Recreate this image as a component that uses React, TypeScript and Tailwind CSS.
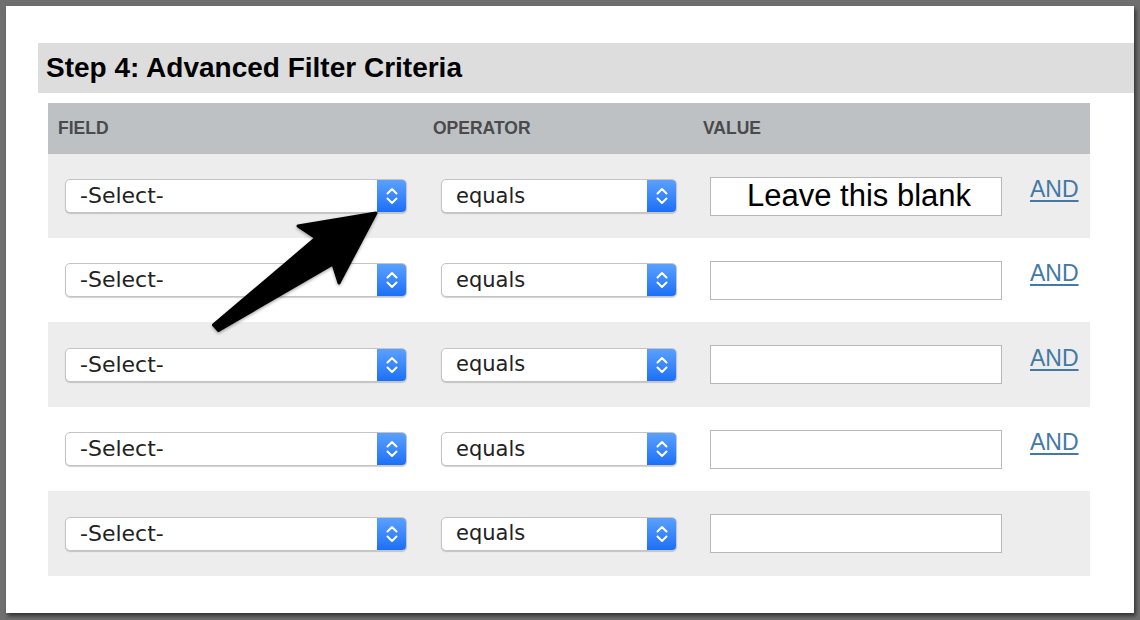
import React from "react";

const rowHeights = [84, 84, 85, 84, 85];

function Chevrons() {
  return (
    <svg width="12" height="20" viewBox="0 0 12 20" fill="none">
      <path d="M1.5 7.5 L6 3 L10.5 7.5" stroke="white" strokeWidth="2" strokeLinecap="round" strokeLinejoin="round" />
      <path d="M1.5 12.5 L6 17 L10.5 12.5" stroke="white" strokeWidth="2" strokeLinecap="round" strokeLinejoin="round" />
    </svg>
  );
}

function MacSelect({ label, width, size }: { label: string; width: string; size: string }) {
  return (
    <div
      className={`${width} h-[34px] flex items-stretch rounded-[5px] border border-[#c4c4c4] bg-white shadow-[0_1px_1px_rgba(0,0,0,0.18)] overflow-hidden`}
    >
      <div
        className={`flex-1 flex items-center pl-[14px] ${size} text-[#222] leading-none`}
        style={{ fontFamily: '"DejaVu Sans", "Noto Sans", sans-serif' }}
      >
        {label}
      </div>
      <div className="w-[29px] flex items-center justify-center bg-gradient-to-b from-[#5aa0ff] to-[#1b6ff6]">
        <Chevrons />
      </div>
    </div>
  );
}

export default function App() {
  return (
    <div
      className="relative w-[1140px] h-[620px] bg-[#6f6f6f] overflow-hidden"
      style={{ fontFamily: '"Liberation Sans", Arial, sans-serif' }}
    >
      <div className="absolute left-[6px] top-[6px] w-[1128px] h-[607px] bg-white shadow-[2px_3px_4px_rgba(0,0,0,0.55)]">
        <div className="pt-[37px] pl-[32px]">
          <div className="h-[50px] bg-[#dddddd] flex items-center pl-[8px]">
            <span className="text-[28px] font-bold text-black">
              Step 4: Advanced Filter Criteria
            </span>
          </div>
          <div className="mt-[10px] ml-[10px] w-[1042px]">
            <div className="grid grid-cols-[375px_270px_327px_1fr] h-[51px] bg-[#bdc1c4] items-center text-[17.5px] font-bold text-[#4a4a4a]">
              <div className="pl-[10px]">FIELD</div>
              <div className="pl-[10px]">OPERATOR</div>
              <div className="pl-[10px]">VALUE</div>
              <div />
            </div>
            {rowHeights.map((h, i) => (
              <div
                key={i}
                className={`grid grid-cols-[375px_270px_327px_1fr] items-center ${i % 2 === 0 ? "bg-[#ededed]" : "bg-white"}`}
                style={{ height: h }}
              >
                <div className="pl-[17px]">
                  <MacSelect label="-Select-" width="w-[342px]" size="text-[22px]" />
                </div>
                <div className="pl-[18px]">
                  <MacSelect label="equals" width="w-[236px]" size="text-[21px]" />
                </div>
                <div className="pl-[17px]">
                  <div className="w-[292px] h-[39px] border border-[#b8b8b8] bg-white flex items-center justify-center">
                    {i === 0 && (
                      <span className="text-[31px] text-black leading-none pl-[6px] mb-[2px]">Leave this blank</span>
                    )}
                  </div>
                </div>
                <div className="pl-[10px] mb-[10px]">
                  {i < 4 && (
                    <a href="#" className="text-[23px] text-[#4279a6] underline underline-offset-[3px] leading-none">
                      AND
                    </a>
                  )}
                </div>
              </div>
            ))}
          </div>
        </div>
      </div>
      <svg
        className="absolute left-0 top-0 pointer-events-none"
        width="1140"
        height="620"
        viewBox="0 0 1140 620"
      >
        <defs>
          <filter id="sh" x="-20%" y="-20%" width="140%" height="140%">
            <feDropShadow dx="0" dy="1.5" stdDeviation="1.5" floodColor="#000" floodOpacity="0.35" />
          </filter>
        </defs>
        <polygon
          points="376,213 298,226 316,238 213.5,325 218.5,330.5 333,264 339,283"
          fill="#000"
          stroke="#000"
          strokeWidth="3"
          strokeLinejoin="round"
          filter="url(#sh)"
        />
      </svg>
    </div>
  );
}
